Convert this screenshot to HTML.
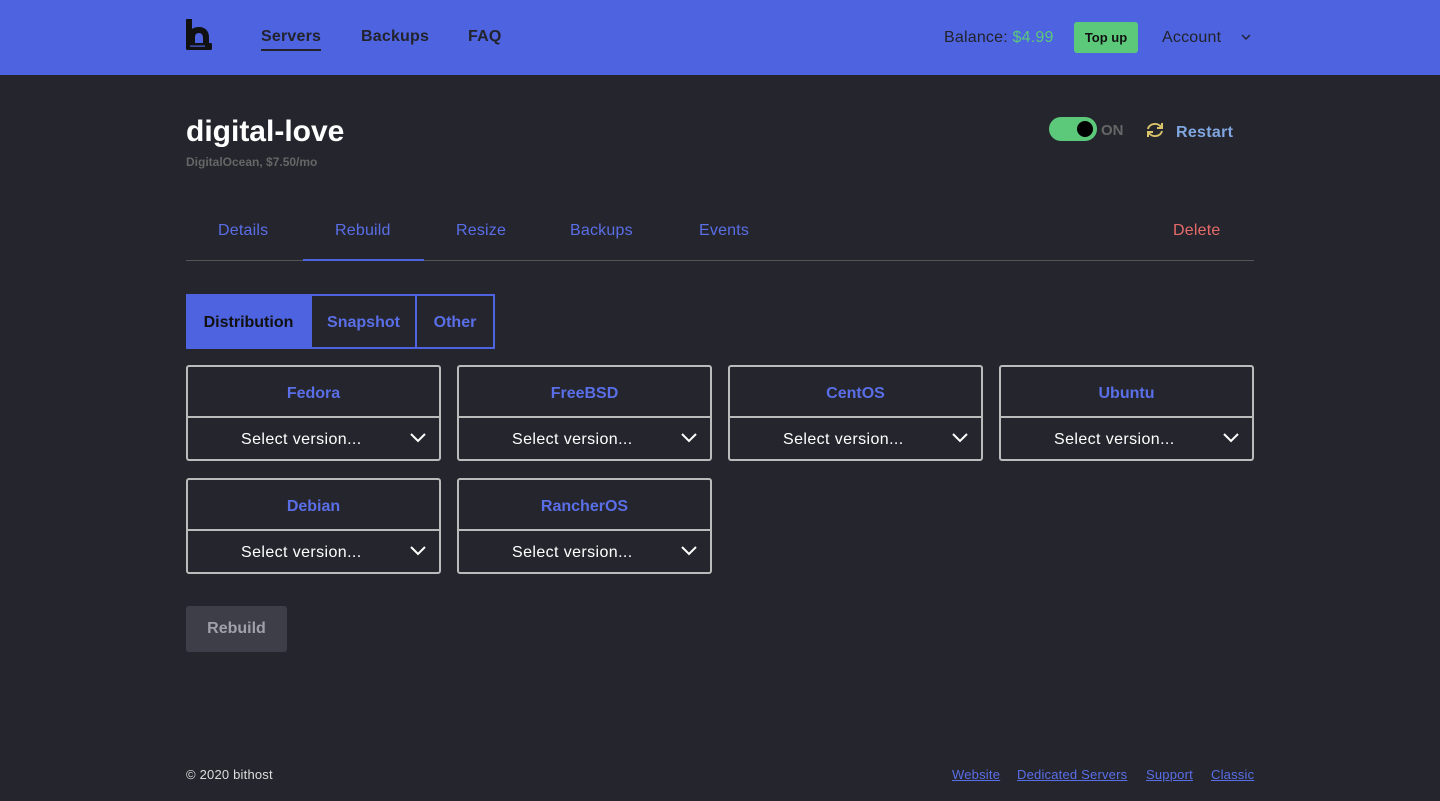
<!DOCTYPE html>
<html><head><meta charset="utf-8"><style>
*{box-sizing:border-box;margin:0;padding:0}
body{width:1440px;height:801px;background:#25262d;font-family:"Liberation Sans",sans-serif;color:#fff;position:relative;overflow:hidden}
.hdr{position:absolute;left:0;top:0;width:1440px;height:75px;background:#4d63e0}
.a{position:absolute;white-space:nowrap}
.nav{font-size:16px;color:#22232b;font-weight:600;top:28px;letter-spacing:.2px}
.tab{font-size:16px;color:#5a6ee8;top:222px;letter-spacing:.2px}
.card{position:absolute;width:255px;height:96px;border:2px solid #bbb;border-radius:3px}
.card .t{height:51px;border-bottom:2px solid #bbb;text-align:center;line-height:53px;color:#5a6ee8;font-weight:600;font-size:16px}
.card .s{height:41px;line-height:43px;font-size:16px;color:#fff;padding-left:53px;position:relative;letter-spacing:.4px}
.card .s svg{position:absolute;right:13px;top:15px}
.ft{font-size:13px;color:#5a6ee8;text-decoration:underline;top:767px;letter-spacing:.2px}
</style></head><body>
<div class="hdr"></div>
<svg class="a" style="left:185px;top:18px" width="28" height="33" viewBox="0 0 28 33"><path d="M1 1h6v10c2-1.5 4-2 7-2 6 0 10 4 10 10v7h-6v-6c0-3-1.5-5-4-5s-4 1.5-4 4v7H1z" fill="#111"/><rect x="1" y="25" width="26" height="7" rx="1.5" fill="#111"/><rect x="5" y="27.5" width="15" height="1.2" fill="#4d63e0"/></svg>
<div class="a nav" style="left:261px">Servers</div>
<div class="a" style="left:261px;top:49px;width:60px;height:2px;background:#22232b"></div>
<div class="a nav" style="left:361px">Backups</div>
<div class="a nav" style="left:468px">FAQ</div>
<div class="a" style="left:944px;top:29px;font-size:16px;color:#22232b;letter-spacing:.2px">Balance: <span style="color:#5cc97a">$4.99</span></div>
<div class="a" style="left:1074px;top:22px;width:64px;height:31px;background:#5cc97a;border-radius:3px;color:#111;font-weight:700;font-size:13px;text-align:center;line-height:31px">Top up</div>
<div class="a" style="left:1162px;top:29px;font-size:16px;color:#22232b;letter-spacing:.2px">Account</div>
<svg class="a" style="left:1241px;top:34px" width="10" height="7"><path d="M1 1l4 4 4-4" stroke="#22232b" stroke-width="1.4" fill="none"/></svg>
<div class="a" style="left:186px;top:115px;font-size:30px;font-weight:700">digital-love</div>
<div class="a" style="left:186px;top:155px;font-size:12px;font-weight:700;color:#666">DigitalOcean, $7.50/mo</div>
<div class="a" style="left:1049px;top:117px;width:48px;height:24px;border-radius:12px;background:#5cc97a"></div>
<div class="a" style="left:1077px;top:121px;width:16px;height:16px;border-radius:50%;background:#000"></div>
<div class="a" style="left:1101px;top:122px;font-size:15px;font-weight:700;color:#666">ON</div>
<svg class="a" style="left:1145px;top:121px" width="20" height="18" viewBox="0 0 20 18"><path d="M3 8a7 6 0 0 1 13-2M17 10a7 6 0 0 1-13 2" stroke="#d9c46a" stroke-width="2" fill="none"/><path d="M17 2v5h-5M3 16v-5h5" stroke="#d9c46a" stroke-width="2" fill="none"/></svg>
<div class="a" style="left:1176px;top:124px;font-size:16px;font-weight:600;color:#7fa6e0;letter-spacing:.3px">Restart</div>
<div class="a tab" style="left:218px">Details</div>
<div class="a tab" style="left:335px">Rebuild</div>
<div class="a tab" style="left:456px">Resize</div>
<div class="a tab" style="left:570px">Backups</div>
<div class="a tab" style="left:699px">Events</div>
<div class="a tab" style="left:1173px;color:#e76a6a">Delete</div>
<div class="a" style="left:186px;top:260px;width:1068px;height:1px;background:#555"></div>
<div class="a" style="left:303px;top:259px;width:121px;height:2px;background:#4d63e0"></div>
<div class="a" style="left:186px;top:294px;width:125px;height:55px;background:#4d63e0;color:#111;font-weight:600;font-size:16px;text-align:center;line-height:57px">Distribution</div>
<div class="a" style="left:310px;top:294px;width:107px;height:55px;border:2px solid #4d63e0;color:#5a6ee8;font-weight:600;font-size:16px;text-align:center;line-height:53px">Snapshot</div>
<div class="a" style="left:415px;top:294px;width:80px;height:55px;border:2px solid #4d63e0;color:#5a6ee8;font-weight:600;font-size:16px;text-align:center;line-height:53px">Other</div>
<div class="card" style="left:186px;top:365px"><div class="t">Fedora</div><div class="s">Select version...<svg width="16" height="10"><path d="M1 1l7 7 7-7" stroke="#fff" stroke-width="2" fill="none"/></svg></div></div>
<div class="card" style="left:457px;top:365px"><div class="t">FreeBSD</div><div class="s">Select version...<svg width="16" height="10"><path d="M1 1l7 7 7-7" stroke="#fff" stroke-width="2" fill="none"/></svg></div></div>
<div class="card" style="left:728px;top:365px"><div class="t">CentOS</div><div class="s">Select version...<svg width="16" height="10"><path d="M1 1l7 7 7-7" stroke="#fff" stroke-width="2" fill="none"/></svg></div></div>
<div class="card" style="left:999px;top:365px"><div class="t">Ubuntu</div><div class="s">Select version...<svg width="16" height="10"><path d="M1 1l7 7 7-7" stroke="#fff" stroke-width="2" fill="none"/></svg></div></div>
<div class="card" style="left:186px;top:478px"><div class="t">Debian</div><div class="s">Select version...<svg width="16" height="10"><path d="M1 1l7 7 7-7" stroke="#fff" stroke-width="2" fill="none"/></svg></div></div>
<div class="card" style="left:457px;top:478px"><div class="t">RancherOS</div><div class="s">Select version...<svg width="16" height="10"><path d="M1 1l7 7 7-7" stroke="#fff" stroke-width="2" fill="none"/></svg></div></div>
<div class="a" style="left:186px;top:606px;width:101px;height:46px;background:#3d3e48;border-radius:3px;color:#a0a0a8;font-weight:700;font-size:16px;text-align:center;line-height:46px">Rebuild</div>
<div class="a" style="left:186px;top:767px;font-size:13px;color:#ddd;letter-spacing:.2px">© 2020 bithost</div>
<div class="a ft" style="left:952px">Website</div>
<div class="a ft" style="left:1017px">Dedicated Servers</div>
<div class="a ft" style="left:1146px">Support</div>
<div class="a ft" style="left:1211px">Classic</div>
</body></html>
